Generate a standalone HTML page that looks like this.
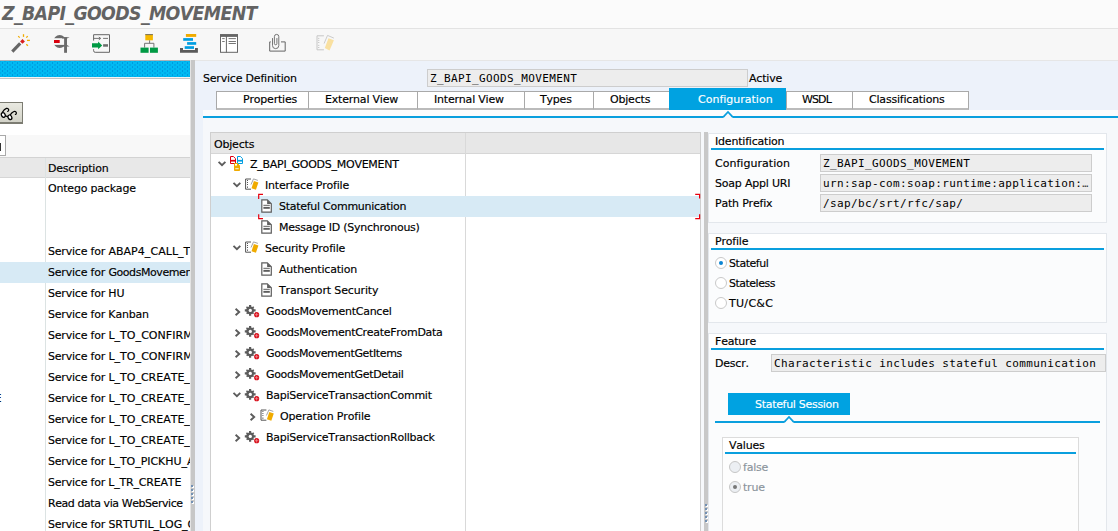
<!DOCTYPE html>
<html><head><meta charset="utf-8"><title>Z_BAPI_GOODS_MOVEMENT</title>
<style>
*{box-sizing:border-box;margin:0;padding:0}
html,body{width:1118px;height:531px;overflow:hidden;background:#fff}
body{position:relative;font-family:"DejaVu Sans","Liberation Sans",sans-serif;font-size:11px;letter-spacing:-0.2px;color:#000;line-height:14px;-webkit-text-stroke:0.15px;font-kerning:none;font-variant-ligatures:none}
.a{position:absolute;white-space:nowrap}
svg{position:absolute;overflow:visible}
.mono{font-family:"DejaVu Sans Mono","Liberation Mono",monospace;font-size:11px;letter-spacing:0.38px;-webkit-text-stroke:0}
#title{left:2px;top:2px;font-family:"DejaVu Sans Condensed","DejaVu Sans","Liberation Sans",sans-serif;font-size:19.3px;letter-spacing:-0.62px;font-weight:bold;font-style:italic;color:#636363;line-height:24px;-webkit-text-stroke:0}
#titlebar{left:0;top:0;width:1118px;height:28px;background:#fbfbfb}
#toolbar{left:0;top:28px;width:1118px;height:33px;background:#f7f7f7;border-top:1px solid #e3e3e3;border-bottom:1px solid #e6e6e6}
#left{left:0;top:61px;width:190px;height:470px;background:#fff;overflow:hidden}
.lrow{left:48px;height:21px;line-height:21px}
.tab{top:91px;height:19px;background:#fff;border:1px solid #a9a9a9;border-bottom:2px solid #bbb;line-height:16px}
.tab span{position:absolute;top:0}
.trow{height:21px;line-height:21px}
.field{height:18px;background:#ededed;border:1px solid #cdcdcd;line-height:16px;padding:1px 0 0 2.1px;overflow:hidden}
.grp{background:#fbfcfd;border:1px solid #e3e7ec}
.ghead{background:#fff}
.gline{height:2px;background:#0a9fde}
.lbl{height:22px;line-height:22px}
</style></head><body>
<div class="a" id="titlebar"></div>
<div class="a" id="title">Z_BAPI_GOODS_MOVEMENT</div>
<div class="a" id="toolbar"></div>
<svg style="left:0;top:28px" width="400" height="33" viewBox="0 28 400 33">
<!-- wand -->
<path d="M12.3 51.6 L20.2 43.4" stroke="#666" stroke-width="3.1" fill="none"/>
<path d="M22.5 39 L24.9 41.4 L22.5 43.8 L20.1 41.4Z" fill="#d81e1e"/>
<g stroke="#f0ab00" stroke-width="1.3" fill="none"><path d="M23.5 34.2V36.9"/><path d="M18.2 36.1L19.7 37.6"/><path d="M27.7 36.1L26.3 37.6"/><path d="M27 40.4H29.9"/><path d="M26.3 44.2L27.9 45.7"/></g>
<!-- clamp -->
<clipPath id="cc"><circle cx="59.7" cy="41.5" r="6.4"/></clipPath>
<g clip-path="url(#cc)" fill="#6b6b6b"><rect x="53.8" y="35" width="12" height="3.2"/><rect x="53.8" y="44.9" width="12" height="3.2"/></g>
<rect x="64.1" y="37.2" width="2.9" height="15.6" fill="#6b6b6b"/>
<path d="M62 37.2H69.6L67 38.6H62Z M62 45H67L69.6 46.6H62Z" fill="#6b6b6b"/>
<rect x="54" y="40" width="5.7" height="3" fill="#d9000d"/>
<!-- doc with green arrow -->
<path d="M93.6 40.6V34.7H109.5V52.3H95.2Q93.6 52.3 93.6 50.7V49.2" fill="none" stroke="#666" stroke-width="1"/>
<path d="M93.6 38.4H100 M98.8 37L100.8 38.4L98.8 39.8 M103.1 38.4H108" fill="none" stroke="#666" stroke-width="0.9"/>
<path d="M92 43.2H98.1V41.5L102.2 45.4L98.1 49.3V47.6H92Z" fill="#009a44"/>
<rect x="103.1" y="44.2" width="4.9" height="2.5" fill="#6b6b6b"/>
<!-- hierarchy -->
<rect x="145.3" y="34.2" width="7.6" height="6.1" fill="#f5b800"/><rect x="145.3" y="34.2" width="7.6" height="0.9" fill="#666"/>
<path d="M149.6 40.3V43.3 M144.6 47.6V43.3H153.9V47.6" fill="none" stroke="#666" stroke-width="0.9"/>
<rect x="140.5" y="47.6" width="8.1" height="5.2" fill="#009a44"/><rect x="150" y="47.6" width="7.9" height="5.2" fill="#009a44"/>
<!-- stack -->
<rect x="185.9" y="34" width="10.3" height="2.9" fill="#f0ab00"/>
<rect x="183.2" y="38.1" width="9.8" height="2.7" fill="#009de0"/>
<rect x="187.1" y="42.1" width="9.1" height="2.7" fill="#009de0"/>
<rect x="184.7" y="46.2" width="9.3" height="2.7" fill="#009de0"/>
<path d="M180 48.1H183V50.1H195V48.1H197.9V52.8H180Z" fill="#5a5a5a"/>
<!-- window -->
<rect x="220.5" y="34.7" width="17" height="17.6" fill="#fff" stroke="#666" stroke-width="1"/>
<rect x="220" y="34.2" width="18" height="2.7" fill="#666"/>
<path d="M226.4 36V52.5" stroke="#666" stroke-width="1"/>
<path d="M222.2 38.6H224.7 M222.2 41.5H224.7 M228.6 38.6H235.9 M228.6 41.5H235.9 M228.6 43.5H235.9" stroke="#666" stroke-width="0.9"/>
<!-- paperclip box -->
<path d="M270.8 41.9H269.7V51.1H285.2V41.9H281" fill="none" stroke="#666" stroke-width="1"/>
<path d="M272.5 38.1V45.5A3.15 3.15 0 0 0 278.8 45.5V36.6A2.2 2.2 0 0 0 274.4 36.6V43.5A1.25 1.25 0 0 0 276.9 43.5V38.1" fill="none" stroke="#666" stroke-width="0.9"/>
<!-- disabled notebook -->
<path d="M323.9 35.8H317V49.8H323.9" fill="none" stroke="#c6c6c6" stroke-width="1"/>
<g fill="#c6c6c6"><rect x="318.1" y="37.9" width="1.2" height="1"/><rect x="318.1" y="39.9" width="1.2" height="1"/><rect x="318.1" y="42" width="1.2" height="1"/><rect x="318.1" y="44.9" width="1.2" height="1"/><rect x="318.1" y="47" width="1.2" height="1"/></g>
<path d="M324.1 43.5L327.5 35.4L333.9 38.1" fill="none" stroke="#c6c6c6" stroke-width="0.9"/>
<path d="M328.5 38.3L333.9 40.3L329.5 50.6L324.8 48.1Z" fill="#f9e0a0"/>
</svg>

<div class="a" style="left:0;top:60px;width:190px;height:1px;background:#a9b3b7"></div>
<div class="a" id="left">
<div class="a" style="left:0;top:0;width:190px;height:16px;background-color:#00baf2;background-image:radial-gradient(circle,rgba(0,140,215,.7) 0.5px,rgba(0,140,215,0) 0.85px),radial-gradient(circle,rgba(0,140,215,.7) 0.5px,rgba(0,140,215,0) 0.85px);background-size:5px 4px;background-position:0 0,2.5px 2px"></div>
<div class="a" style="left:0;top:16px;width:190px;height:1px;background:#f4f2f2"></div>
<div class="a" style="left:0;top:17px;width:190px;height:1px;background:#c4c4c4"></div>
<div class="a" style="left:-2px;top:41px;width:25px;height:22px;background:linear-gradient(#e9e9e1,#dcdcd2 60%,#d2d2c8);border-top:1.5px solid #7c7c72;border-right:1px solid #7c7c72;border-bottom:2px solid #7c7c72"></div>
<svg style="left:0;top:37px" width="30" height="30" viewBox="0 98 30 30">
<g fill="none" stroke="#000" stroke-width="1.25">
<path d="M2.2 112.6C3.4 110.6 4.8 109 6.4 108.4C8 108 9 109.4 8.6 110.6C8.3 111.3 7.8 111.5 7.3 111.2"/>
<path d="M10.2 114.9C11.3 113.2 12.4 112.1 14 111.5C15.6 111 16.6 112.3 16.3 113.5C16 114.3 15.5 114.6 15 114.3"/>
<ellipse cx="3.3" cy="115" rx="1.8" ry="2.4" transform="rotate(-28 3.3 115)" fill="#fff"/>
<ellipse cx="9.9" cy="117.3" rx="1.8" ry="2.4" transform="rotate(-28 9.9 117.3)" fill="#fff"/>
<path d="M5.3 115.8L8 116.6"/>
</g></svg>

<div class="a" style="left:0;top:74px;width:190px;height:22px;background:#f8f8f8"></div>
<div class="a" style="left:-2px;top:74px;width:8px;height:21px;background:#fff;border:1px solid #a9a9a9"></div>
<div class="a" style="left:0;top:82px;width:1px;height:8px;background:#333"></div>
<div class="a" style="left:0;top:96px;width:190px;height:21px;background:#e8e8e8;border-top:1px solid #d3d3d3;border-bottom:1px solid #d6d6d6"></div>
<div class="a" style="left:45px;top:97px;width:1px;height:374px;background:#dce3e3"></div>
<div class="a" style="left:0;top:201px;width:190px;height:21px;background:#d7eaf5"></div>
<div class="a lrow" style="top:97px">Description</div>
<div class="a lrow" style="top:117px">Ontego package</div>
<div class="a lrow" style="top:180px">Service for <span style="letter-spacing:0.05px">ABAP4_CALL_T</span></div>
<div class="a lrow" style="top:201px">Service for <span style="letter-spacing:-0.42px">GoodsMovement</span></div>
<div class="a lrow" style="top:222px">Service for HU</div>
<div class="a lrow" style="top:243px">Service for Kanban</div>
<div class="a lrow" style="top:264px">Service for <span style="letter-spacing:0.05px">L_TO_CONFIRM</span></div>
<div class="a lrow" style="top:285px">Service for <span style="letter-spacing:0.05px">L_TO_CONFIRM</span></div>
<div class="a lrow" style="top:306px">Service for <span style="letter-spacing:0.00px">L_TO_CREATE_</span></div>
<div class="a lrow" style="top:327px">Service for <span style="letter-spacing:0.00px">L_TO_CREATE_</span></div>
<div class="a lrow" style="top:348px">Service for <span style="letter-spacing:0.00px">L_TO_CREATE_</span></div>
<div class="a lrow" style="top:369px">Service for <span style="letter-spacing:0.00px">L_TO_CREATE_</span></div>
<div class="a lrow" style="top:390px">Service for <span style="letter-spacing:-0.05px">L_TO_PICKHU_A</span></div>
<div class="a lrow" style="top:411px">Service for L_TR_CREATE</div>
<div class="a lrow" style="top:432px"><span style="letter-spacing:-0.43px">Read data via WebService</span></div>
<div class="a lrow" style="top:453px">Service for <span style="letter-spacing:-0.05px">SRTUTIL_LOG_G</span></div>
<div class="a lrow" style="left:-5.6px;top:327px">E</div>
</div>
<div class="a" style="left:190px;top:60px;width:5px;height:471px;background:#c7c7c7;border-left:1px solid #e4e4e4"></div>
<div class="a" style="left:192.3px;top:486px;width:2px;height:2px;background:#fff"></div><div class="a" style="left:191.3px;top:485px;width:2px;height:2px;background:#7391b3"></div>
<div class="a" style="left:192.3px;top:490px;width:2px;height:2px;background:#fff"></div><div class="a" style="left:191.3px;top:489px;width:2px;height:2px;background:#7391b3"></div>
<div class="a" style="left:192.3px;top:494px;width:2px;height:2px;background:#fff"></div><div class="a" style="left:191.3px;top:493px;width:2px;height:2px;background:#7391b3"></div>
<div class="a" style="left:192.3px;top:498px;width:2px;height:2px;background:#fff"></div><div class="a" style="left:191.3px;top:497px;width:2px;height:2px;background:#7391b3"></div>
<div class="a" style="left:192.3px;top:502px;width:2px;height:2px;background:#fff"></div><div class="a" style="left:191.3px;top:501px;width:2px;height:2px;background:#7391b3"></div>
<div class="a" style="left:195px;top:61px;width:923px;height:470px;background:#edf2fa"></div>
<div class="a lbl" style="left:203px;top:68px">Service Definition</div>
<div class="a field mono" style="left:427px;top:69px;width:321px">Z_BAPI_GOODS_MOVEMENT</div>
<div class="a lbl" style="left:749px;top:68px">Active</div>
<div class="a tab" style="left:216px;width:93px;"><span style="left:26px">Properties</span></div>
<div class="a tab" style="left:308px;width:110px;"><span style="left:16px">External View</span></div>
<div class="a tab" style="left:417px;width:108px;"><span style="left:16px">Internal View</span></div>
<div class="a tab" style="left:524px;width:70px;"><span style="left:15px">Types</span></div>
<div class="a tab" style="left:593px;width:77px;"><span style="left:16px">Objects</span></div>
<div class="a tab" style="left:786px;width:67px;"><span style="left:15px"><span style='position:static;letter-spacing:-0.9px'>WSDL</span></span></div>
<div class="a tab" style="left:852px;width:117px;"><span style="left:16px">Classifications</span></div>
<div class="a" style="left:669px;top:88px;width:117px;height:22px;background:#00a2e1;color:#fff;line-height:22px;letter-spacing:0"><span class="a" style="left:29px;top:1px">Configuration</span></div>
<div class="a" style="left:203px;top:110px;width:915px;height:421px;background:#f6f8fb"></div>
<div class="a" style="left:203px;top:110px;width:915px;height:6px;background:#fcfcfd"></div>
<div class="a gline" style="left:203px;top:116px;width:915px"></div>
<svg style="left:720px;top:110px" width="16" height="9"><path d="M3 8.2 L8 2.4 L13 8.2Z" fill="#f6f8fb"/><path d="M3.4 6.9 L8 2 L12.6 6.9" fill="none" stroke="#0a9fde" stroke-width="1.7"/></svg>
<div class="a" style="left:210px;top:132px;width:491px;height:399px;background:#fff;border:1px solid #cfcfcf;border-bottom:none"></div>
<div class="a" style="left:211px;top:133px;width:489px;height:21px;background:#e7e7e7;border-bottom:1px solid #d6d6d6"></div>
<div class="a" style="left:465px;top:133px;width:1px;height:398px;background:#d9d9d9"></div>
<div class="a" style="left:211px;top:196px;width:489px;height:21px;background:#d7eaf5"></div>
<svg style="left:0;top:0" width="1118" height="531" viewBox="0 0 1118 531">
<path d="M218.6 161.9L222.0 165.2L225.39999999999998 161.9" fill="none" stroke="#5c5c5c" stroke-width="1.9"/>
<path d="M230.5 156.5H233.4L235.5 158.6V163.5H230.5Z" fill="#fff" stroke="#e00012" stroke-width="1" stroke-linejoin="miter"/>
<rect x="230" y="159.9" width="6" height="1.7" fill="#e00012"/>
<path d="M237.5 156.5H240.4L242.5 158.6V163.5H237.5Z" fill="#fff" stroke="#009de0" stroke-width="1" stroke-linejoin="miter"/>
<rect x="237" y="159.9" width="6" height="1.7" fill="#009de0"/>
<path d="M234.5 163.5H237.4L239.5 165.6V170.5H234.5Z" fill="#f0ab00" stroke="#f0ab00" stroke-width="1" stroke-linejoin="miter"/>
<rect x="235" y="164" width="2" height="1.6" fill="#fff"/><rect x="235.3" y="168.3" width="3.4" height="0.9" fill="#fff"/>
<path d="M233.5 182.9L236.9 186.2L240.29999999999998 182.9" fill="none" stroke="#5c5c5c" stroke-width="1.9"/>
<g transform="translate(0.0 0)"><path d="M251 179H245.6V189.2H251" fill="none" stroke="#555" stroke-width="1"/><g fill="#555"><rect x="247" y="180" width="1" height="1"/><rect x="247" y="182" width="1" height="1"/><rect x="247" y="184" width="1" height="1"/><rect x="247" y="186.5" width="1" height="1.3"/></g><path d="M251 184.5L253.5 178.9L257.9 180.4" fill="none" stroke="#9a9a9a" stroke-width="0.9"/><path d="M253.9 180.9L258.4 182.6L255.9 189.7L251.5 188.2Z" fill="#f0ab00"/></g>
<path d="M261.8 199.8H267.3L271.3 203.8V212.1H261.8Z" fill="#fff" stroke="#5e5e5e" stroke-width="1.2"/><path d="M267.1 199.8L271.3 204.0H267.1Z" fill="#5e5e5e"/><path d="M263.4 205.3H269.8" stroke="#5e5e5e" stroke-width="1"/><rect x="263.4" y="206.9" width="6.4" height="1.9" fill="#5e5e5e"/>
<path d="M261.8 220.8H267.3L271.3 224.8V233.1H261.8Z" fill="#fff" stroke="#5e5e5e" stroke-width="1.2"/><path d="M267.1 220.8L271.3 225.0H267.1Z" fill="#5e5e5e"/><path d="M263.4 226.3H269.8" stroke="#5e5e5e" stroke-width="1"/><rect x="263.4" y="227.9" width="6.4" height="1.9" fill="#5e5e5e"/>
<path d="M233.5 245.9L236.9 249.2L240.29999999999998 245.9" fill="none" stroke="#5c5c5c" stroke-width="1.9"/>
<g transform="translate(0.0 63)"><path d="M251 179H245.6V189.2H251" fill="none" stroke="#555" stroke-width="1"/><g fill="#555"><rect x="247" y="180" width="1" height="1"/><rect x="247" y="182" width="1" height="1"/><rect x="247" y="184" width="1" height="1"/><rect x="247" y="186.5" width="1" height="1.3"/></g><path d="M251 184.5L253.5 178.9L257.9 180.4" fill="none" stroke="#9a9a9a" stroke-width="0.9"/><path d="M253.9 180.9L258.4 182.6L255.9 189.7L251.5 188.2Z" fill="#f0ab00"/></g>
<path d="M261.8 262.8H267.3L271.3 266.8V275.1H261.8Z" fill="#fff" stroke="#5e5e5e" stroke-width="1.2"/><path d="M267.1 262.8L271.3 267.0H267.1Z" fill="#5e5e5e"/><path d="M263.4 268.3H269.8" stroke="#5e5e5e" stroke-width="1"/><rect x="263.4" y="269.9" width="6.4" height="1.9" fill="#5e5e5e"/>
<path d="M261.8 283.8H267.3L271.3 287.8V296.1H261.8Z" fill="#fff" stroke="#5e5e5e" stroke-width="1.2"/><path d="M267.1 283.8L271.3 288.0H267.1Z" fill="#5e5e5e"/><path d="M263.4 289.3H269.8" stroke="#5e5e5e" stroke-width="1"/><rect x="263.4" y="290.9" width="6.4" height="1.9" fill="#5e5e5e"/>
<path d="M235.60000000000002 308.7L239.20000000000002 312L235.60000000000002 315.3" fill="none" stroke="#5c5c5c" stroke-width="1.9"/>
<g transform="translate(250.1 310.3)"><circle r="3.9" fill="#5c5c5c"/><path d="M0 -5.3V5.4M-5.3 0H5.5" stroke="#5c5c5c" stroke-width="2.2"/><path d="M-3.6 -3.6L3.4 3.4M3.6 -3.6L-3.4 3.4" stroke="#5c5c5c" stroke-width="1.6"/><circle cx="0.2" cy="0.1" r="1.65" fill="#fff"/><circle cx="6.5" cy="4.4" r="2.6" fill="#d9101c"/><path d="M6.5 2.6v3.6M4.7 4.4h3.6" stroke="#f0a6aa" stroke-width="0.6"/></g>
<path d="M235.60000000000002 329.7L239.20000000000002 333L235.60000000000002 336.3" fill="none" stroke="#5c5c5c" stroke-width="1.9"/>
<g transform="translate(250.1 331.3)"><circle r="3.9" fill="#5c5c5c"/><path d="M0 -5.3V5.4M-5.3 0H5.5" stroke="#5c5c5c" stroke-width="2.2"/><path d="M-3.6 -3.6L3.4 3.4M3.6 -3.6L-3.4 3.4" stroke="#5c5c5c" stroke-width="1.6"/><circle cx="0.2" cy="0.1" r="1.65" fill="#fff"/><circle cx="6.5" cy="4.4" r="2.6" fill="#d9101c"/><path d="M6.5 2.6v3.6M4.7 4.4h3.6" stroke="#f0a6aa" stroke-width="0.6"/></g>
<path d="M235.60000000000002 350.7L239.20000000000002 354L235.60000000000002 357.3" fill="none" stroke="#5c5c5c" stroke-width="1.9"/>
<g transform="translate(250.1 352.3)"><circle r="3.9" fill="#5c5c5c"/><path d="M0 -5.3V5.4M-5.3 0H5.5" stroke="#5c5c5c" stroke-width="2.2"/><path d="M-3.6 -3.6L3.4 3.4M3.6 -3.6L-3.4 3.4" stroke="#5c5c5c" stroke-width="1.6"/><circle cx="0.2" cy="0.1" r="1.65" fill="#fff"/><circle cx="6.5" cy="4.4" r="2.6" fill="#d9101c"/><path d="M6.5 2.6v3.6M4.7 4.4h3.6" stroke="#f0a6aa" stroke-width="0.6"/></g>
<path d="M235.60000000000002 371.7L239.20000000000002 375L235.60000000000002 378.3" fill="none" stroke="#5c5c5c" stroke-width="1.9"/>
<g transform="translate(250.1 373.3)"><circle r="3.9" fill="#5c5c5c"/><path d="M0 -5.3V5.4M-5.3 0H5.5" stroke="#5c5c5c" stroke-width="2.2"/><path d="M-3.6 -3.6L3.4 3.4M3.6 -3.6L-3.4 3.4" stroke="#5c5c5c" stroke-width="1.6"/><circle cx="0.2" cy="0.1" r="1.65" fill="#fff"/><circle cx="6.5" cy="4.4" r="2.6" fill="#d9101c"/><path d="M6.5 2.6v3.6M4.7 4.4h3.6" stroke="#f0a6aa" stroke-width="0.6"/></g>
<path d="M233.5 392.9L236.9 396.2L240.29999999999998 392.9" fill="none" stroke="#5c5c5c" stroke-width="1.9"/>
<g transform="translate(250.1 394.3)"><circle r="3.9" fill="#5c5c5c"/><path d="M0 -5.3V5.4M-5.3 0H5.5" stroke="#5c5c5c" stroke-width="2.2"/><path d="M-3.6 -3.6L3.4 3.4M3.6 -3.6L-3.4 3.4" stroke="#5c5c5c" stroke-width="1.6"/><circle cx="0.2" cy="0.1" r="1.65" fill="#fff"/><circle cx="6.5" cy="4.4" r="2.6" fill="#d9101c"/><path d="M6.5 2.6v3.6M4.7 4.4h3.6" stroke="#f0a6aa" stroke-width="0.6"/></g>
<path d="M250.60000000000002 413.7L254.20000000000002 417L250.60000000000002 420.3" fill="none" stroke="#5c5c5c" stroke-width="1.9"/>
<g transform="translate(15.400000000000006 231)"><path d="M251 179H245.6V189.2H251" fill="none" stroke="#555" stroke-width="1"/><g fill="#555"><rect x="247" y="180" width="1" height="1"/><rect x="247" y="182" width="1" height="1"/><rect x="247" y="184" width="1" height="1"/><rect x="247" y="186.5" width="1" height="1.3"/></g><path d="M251 184.5L253.5 178.9L257.9 180.4" fill="none" stroke="#9a9a9a" stroke-width="0.9"/><path d="M253.9 180.9L258.4 182.6L255.9 189.7L251.5 188.2Z" fill="#f0ab00"/></g>
<path d="M235.60000000000002 434.7L239.20000000000002 438L235.60000000000002 441.3" fill="none" stroke="#5c5c5c" stroke-width="1.9"/>
<g transform="translate(250.1 436.3)"><circle r="3.9" fill="#5c5c5c"/><path d="M0 -5.3V5.4M-5.3 0H5.5" stroke="#5c5c5c" stroke-width="2.2"/><path d="M-3.6 -3.6L3.4 3.4M3.6 -3.6L-3.4 3.4" stroke="#5c5c5c" stroke-width="1.6"/><circle cx="0.2" cy="0.1" r="1.65" fill="#fff"/><circle cx="6.5" cy="4.4" r="2.6" fill="#d9101c"/><path d="M6.5 2.6v3.6M4.7 4.4h3.6" stroke="#f0a6aa" stroke-width="0.6"/></g>
<path d="M263 194.3H258.7V199 M258.7 214.2V218.6H263 M695.2 194.3H699.6V198.5 M699.6 214.2V218.6H695.2" fill="none" stroke="#e8000e" stroke-width="1.2"/>
</svg>
<div class="a trow" style="left:214px;top:134px">Objects</div>
<div class="a trow" style="left:250px;top:154px;letter-spacing:-0.27px">Z_BAPI_GOODS_MOVEMENT</div>
<div class="a trow" style="left:265px;top:175px">Interface Profile</div>
<div class="a trow" style="left:279px;top:196px;letter-spacing:-0.27px">Stateful Communication</div>
<div class="a trow" style="left:279px;top:217px;letter-spacing:-0.25px">Message ID (Synchronous)</div>
<div class="a trow" style="left:265px;top:238px">Security Profile</div>
<div class="a trow" style="left:279px;top:259px">Authentication</div>
<div class="a trow" style="left:279px;top:280px;letter-spacing:-0.14px">Transport Security</div>
<div class="a trow" style="left:266px;top:301px;letter-spacing:-0.25px">GoodsMovementCancel</div>
<div class="a trow" style="left:266px;top:322px;letter-spacing:-0.29px">GoodsMovementCreateFromData</div>
<div class="a trow" style="left:266px;top:343px;letter-spacing:-0.35px">GoodsMovementGetItems</div>
<div class="a trow" style="left:266px;top:364px;letter-spacing:-0.34px">GoodsMovementGetDetail</div>
<div class="a trow" style="left:266px;top:385px;letter-spacing:-0.25px">BapiServiceTransactionCommit</div>
<div class="a trow" style="left:280px;top:406px;letter-spacing:-0.14px">Operation Profile</div>
<div class="a trow" style="left:266px;top:427px;letter-spacing:-0.25px">BapiServiceTransactionRollback</div>
<div class="a" style="left:704px;top:132px;width:4px;height:399px;background:#c8c8c8"></div>
<div class="a" style="left:705.8px;top:505px;width:2px;height:2px;background:#fff"></div><div class="a" style="left:704.8px;top:504px;width:2px;height:2px;background:#7391b3"></div>
<div class="a" style="left:705.8px;top:509px;width:2px;height:2px;background:#fff"></div><div class="a" style="left:704.8px;top:508px;width:2px;height:2px;background:#7391b3"></div>
<div class="a" style="left:705.8px;top:513px;width:2px;height:2px;background:#fff"></div><div class="a" style="left:704.8px;top:512px;width:2px;height:2px;background:#7391b3"></div>
<div class="a" style="left:705.8px;top:517px;width:2px;height:2px;background:#fff"></div><div class="a" style="left:704.8px;top:516px;width:2px;height:2px;background:#7391b3"></div>
<div class="a" style="left:705.8px;top:521px;width:2px;height:2px;background:#fff"></div><div class="a" style="left:704.8px;top:520px;width:2px;height:2px;background:#7391b3"></div>
<div class="a grp" style="left:708px;top:133px;width:399px;height:90px"></div>
<div class="a ghead" style="left:709px;top:134px;width:397px;height:14px"></div>
<div class="a lbl" style="left:715px;top:131px">Identification</div>
<div class="a gline" style="left:711px;top:148px;width:393px"></div>
<div class="a lbl" style="left:715px;top:153px"><span style='letter-spacing:0.03px'>Configuration</span></div>
<div class="a field mono" style="left:820px;top:154px;width:272px">Z_BAPI_GOODS_MOVEMENT</div>
<div class="a lbl" style="left:715px;top:173px">Soap Appl URI</div>
<div class="a field mono" style="left:820px;top:174px;width:272px">urn:sap-com:soap:runtime:application:<span style='font-size:10px;letter-spacing:0;color:#333'>…</span></div>
<div class="a lbl" style="left:715px;top:193px">Path Prefix</div>
<div class="a field mono" style="left:820px;top:194px;width:272px">/sap/bc/srt/rfc/sap/</div>
<div class="a grp" style="left:708px;top:233px;width:399px;height:90px"></div>
<div class="a ghead" style="left:709px;top:234px;width:397px;height:14px"></div>
<div class="a lbl" style="left:715px;top:231px">Profile</div>
<div class="a gline" style="left:711px;top:248px;width:393px"></div>
<div class="a" style="left:714.6px;top:257.1px;width:12px;height:12px;border-radius:50%;background:#fff;border:1.7px solid #c9c9c9"></div>
<div class="a" style="left:718.5px;top:261.0px;width:4.2px;height:4.2px;border-radius:50%;background:#0a84d2"></div>
<div class="a lbl" style="left:729px;top:253px"><span style='letter-spacing:-0.45px'>Stateful</span></div>
<div class="a" style="left:714.6px;top:277.1px;width:12px;height:12px;border-radius:50%;background:#fff;border:1.7px solid #c9c9c9"></div>
<div class="a lbl" style="left:729px;top:273px"><span style='letter-spacing:-0.5px'>Stateless</span></div>
<div class="a" style="left:714.6px;top:297.1px;width:12px;height:12px;border-radius:50%;background:#fff;border:1.7px solid #c9c9c9"></div>
<div class="a lbl" style="left:729px;top:293px"><span style='letter-spacing:0.3px'>TU/C&amp;C</span></div>
<div class="a grp" style="left:708px;top:333px;width:399px;height:210px"></div>
<div class="a ghead" style="left:709px;top:334px;width:397px;height:14px"></div>
<div class="a lbl" style="left:715px;top:331px">Feature</div>
<div class="a gline" style="left:711px;top:348px;width:393px"></div>
<div class="a lbl" style="left:715px;top:353px">Descr.</div>
<div class="a field mono" style="left:771px;top:354px;width:335px">Characteristic includes stateful communication</div>
<div class="a" style="left:728px;top:393px;width:122px;height:22px;background:#00a2e1;color:#fff;line-height:22px"><span class="a" style="left:27px;top:1px;letter-spacing:-0.3px">Stateful Session</span></div>
<div class="a gline" style="left:715px;top:421px;width:385px"></div>
<svg style="left:781px;top:415px" width="16" height="9"><path d="M3 8.2 L8 2.4 L13 8.2Z" fill="#fbfcfd"/><path d="M3.4 6.9 L8 2 L12.6 6.9" fill="none" stroke="#0a9fde" stroke-width="1.7"/></svg>
<div class="a" style="left:722px;top:437px;width:357px;height:94px;background:#fdfdfd;border:1px solid #dcdcdc;border-bottom:none"></div>
<div class="a" style="left:723px;top:438px;width:355px;height:14px;background:#fff"></div>
<div class="a lbl" style="left:729px;top:435px">Values</div>
<div class="a gline" style="left:725px;top:452px;width:351px"></div>
<div class="a" style="left:728.8px;top:461.0px;width:12px;height:12px;border-radius:50%;background:#eceff3;border:1.8px solid #c6c6c6"></div>
<div class="a lbl" style="left:743px;top:457px;color:#8b949c">false</div>
<div class="a" style="left:728.8px;top:481.0px;width:12px;height:12px;border-radius:50%;background:#eceff3;border:1.8px solid #c6c6c6"></div>
<div class="a" style="left:732.7px;top:484.9px;width:4.2px;height:4.2px;border-radius:50%;background:#777"></div>
<div class="a lbl" style="left:743px;top:477px;color:#8b949c">true</div>
</body></html>
